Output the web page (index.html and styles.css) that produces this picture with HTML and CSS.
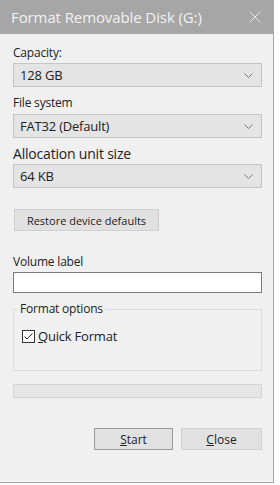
FILE: index.html
```html
<!DOCTYPE html>
<html>
<head>
<meta charset="utf-8">
<link rel="stylesheet" href="styles.css">
</head>
<body>
<div class="window">
  <div class="titlebar">
    <span class="title">Format Removable Disk (G:)</span>
    <svg class="close" width="12" height="12" viewBox="0 0 12 12"><path d="M0.5 0.5 L11.5 11.5 M11.5 0.5 L0.5 11.5" stroke="#e6e6e6" stroke-width="1" fill="none"/></svg>
  </div>
  <div class="content">
    <div class="label l-cap">Capacity:</div>
    <div class="select"><span>128 GB</span><svg class="chev" width="9" height="5" viewBox="0 0 9 5"><path d="M0.5 0.5 L4.5 4.5 L8.5 0.5" stroke="#777" fill="none"/></svg></div>
    <div class="label l-fs">File system</div>
    <div class="select"><span>FAT32 (Default)</span><svg class="chev" width="9" height="5" viewBox="0 0 9 5"><path d="M0.5 0.5 L4.5 4.5 L8.5 0.5" stroke="#777" fill="none"/></svg></div>
    <div class="label big l-alloc">Allocation unit size</div>
    <div class="select"><span>64 KB</span><svg class="chev" width="9" height="5" viewBox="0 0 9 5"><path d="M0.5 0.5 L4.5 4.5 L8.5 0.5" stroke="#777" fill="none"/></svg></div>
    <div class="btn restore">Restore device defaults</div>
    <div class="label l-vol">Volume label</div>
    <div class="input"></div>
    <div class="group">
      <div class="legend">Format options</div>
      <div class="check-row">
        <svg class="checkbox" width="13" height="13" viewBox="0 0 13 13"><rect x="0.5" y="0.5" width="12" height="12" fill="#fff" stroke="#333"/><path d="M2.5 6.5 L5 9 L10.5 3.5" stroke="#222" stroke-width="1" fill="none"/></svg>
        <span><u>Q</u>uick Format</span>
      </div>
    </div>
    <div class="progress"></div>
    <div class="actions">
      <div class="btn start"><u>S</u>tart</div>
      <div class="btn closebtn"><u>C</u>lose</div>
    </div>
  </div>
</div>
</body>
</html>
```
FILE: styles.css
```css
html, body {
  margin: 0;
  padding: 0;
  background: #ffffff;
}
body {
  font-family: "Open Sans", "Noto Sans", sans-serif;
  color: #222;
}
.window {
  width: 273px;
  height: 482px;
  background: #f0f0f0;
  border-right: 1px solid #a8a8a8;
  border-bottom: 1px solid #a8a8a8;
  display: flex;
  flex-direction: column;
}
.titlebar {
  height: 34px;
  background: #a6a6a6;
  display: flex;
  align-items: center;
  justify-content: space-between;
  padding: 0 12px 0 11px;
}
.title {
  color: #f2f2f2;
  font-size: 15px;
  letter-spacing: -0.1px;
}
.close {
  display: block;
}
.content {
  padding: 0 11px 0 13px;
  display: flex;
  flex-direction: column;
}
.label {
  font-size: 12px;
  line-height: 16px;
  letter-spacing: -0.2px;
  color: #222;
}
.label.big {
  font-size: 14px;
  line-height: 18px;
}
.l-cap { margin-top: 11px; margin-bottom: 2px; }
.l-fs { margin-top: 8px; margin-bottom: 3px; }
.l-alloc { margin-top: 7px; margin-bottom: 1px; }
.l-vol { margin-top: 23px; margin-bottom: 2px; }
.select {
  height: 22px;
  border: 1px solid #c4c4c4;
  background: #e4e4e4;
  display: flex;
  align-items: center;
  justify-content: space-between;
  padding: 0 8px 0 6px;
  font-size: 13px;
  letter-spacing: -0.2px;
}
.chev { display: block; }
.btn {
  display: flex;
  align-items: center;
  justify-content: center;
  border: 1px solid #cfcfcf;
  background: #e1e1e1;
  font-size: 12px;
  height: 20px;
  color: #222;
}
.restore {
  margin-top: 21px;
  margin-left: 1px;
  width: 143px;
  font-size: 11px;
}
.input {
  height: 19px;
  background: #fff;
  border: 1px solid #7a7a7a;
}
.group {
  margin-top: 16px;
  height: 60px;
  border: 1px solid #dcdcdc;
  position: relative;
  padding: 0 8px;
}
.legend {
  position: absolute;
  top: -9px;
  left: 4px;
  padding: 0 2px;
  background: #f0f0f0;
  font-size: 12px;
  line-height: 16px;
  letter-spacing: -0.2px;
}
.check-row {
  display: flex;
  align-items: center;
  gap: 3px;
  margin-top: 17px;
  font-size: 13px;
  letter-spacing: -0.2px;
}
.checkbox { display: block; }
.progress {
  margin-top: 13px;
  height: 12px;
  border: 1px solid #d4d4d4;
  background: #e6e6e6;
}
.actions {
  margin-top: 30px;
  display: flex;
  justify-content: flex-end;
  gap: 8px;
}
.start {
  width: 77px;
  border-color: #9a9a9a;
}
.closebtn {
  width: 79px;
}
```
